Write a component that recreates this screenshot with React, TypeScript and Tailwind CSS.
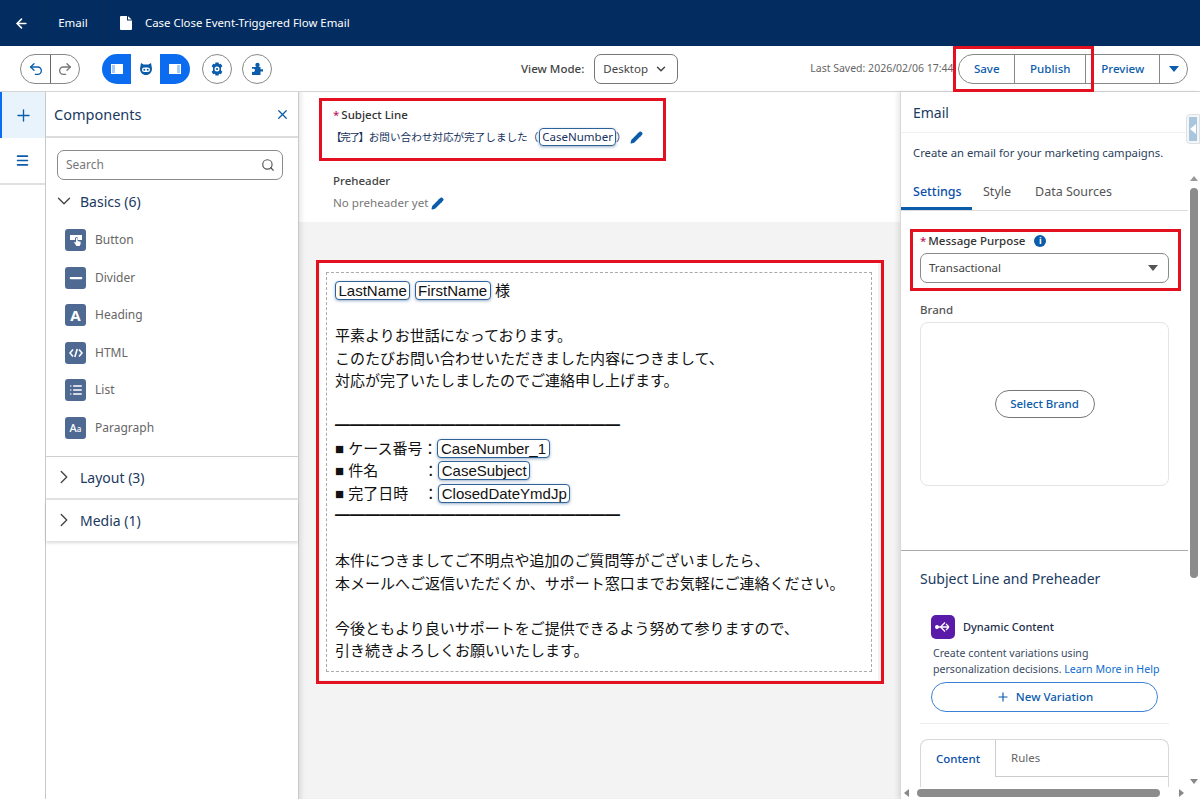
import type { ReactNode } from "react";
import {
  ArrowLeft,
  ChevronDown,
  ChevronRight,
  List,
  Menu,
  Minus,
  Pencil,
  Plus,
  Redo2,
  Search,
  Undo2,
  X,
} from "lucide-react";

const components = [
  { name: "Button", icon: "button" },
  { name: "Divider", icon: "divider" },
  { name: "Heading", icon: "heading" },
  { name: "HTML", icon: "html" },
  { name: "List", icon: "list" },
  { name: "Paragraph", icon: "paragraph" },
];

function ComponentIcon({ icon }: { icon: string }) {
  return (
    <span className="w-[21px] h-[22px] rounded-[3px] bg-[#4f6a92] text-white flex items-center justify-center shrink-0">
      {icon === "button" && (
        <svg width="14" height="14" viewBox="0 0 14 14" fill="currentColor">
          <path d="M1 2h12v5H9V5.500a1.500 1.500 0 0 0-3 0V7H1z" />
          <path d="M7 5.500a.8.8 0 0 1 1.600 0V8l3 .8V11l-1 2H7.500L5 9.500l1-.7 1 1z" />
        </svg>
      )}
      {icon === "divider" && <Minus size={18} strokeWidth={3} />}
      {icon === "heading" && <span className="text-[15px] font-bold leading-none">A</span>}
      {icon === "html" && (
        <svg width="14" height="10" viewBox="0 0 14 10" fill="none" stroke="currentColor" strokeWidth="1.600">
          <path d="M4 1.500 1 5l3 3.500M10 1.500 13 5l-3 3.500M8.200 1 5.800 9" />
        </svg>
      )}
      {icon === "list" && <List size={14} strokeWidth={2.5} />}
      {icon === "paragraph" && (
        <span className="text-[11px] font-medium leading-none">
          A<span className="text-[8px]">a</span>
        </span>
      )}
    </span>
  );
}

function Chip({ children }: { children: ReactNode }) {
  return (
    <span className="inline-block border border-[#2f6296] rounded-[4px] px-[2.500px] leading-[17px] shadow-[0_1px_3px_rgba(47,98,150,0.5)] bg-white">
      {children}
    </span>
  );
}

function PanelIcon({ side }: { side: "left" | "right" }) {
  return (
    <svg width="12" height="10" viewBox="0 0 12 10">
      <rect width="12" height="10" fill="white" />
      <rect x={side === "left" ? 1 : 8} y="1" width="3" height="8" fill="#a8ccf8" />
    </svg>
  );
}

function LeftPanel() {
  return (
    <div className="w-[254px] h-full shrink-0 border-x border-[#c9c9c9] flex flex-col">
      <div className="h-[46px] pl-2 pr-[8px] flex items-center justify-between border-b-2 border-[#dcdcdc]">
        <span className="text-[14.500px] text-[#1b3a5f] mt-px">Components</span>
        <X size={15} strokeWidth={2} className="text-[#0b5cab] mt-px" />
      </div>
      <div className="pl-[11px] pr-[15px] pt-[12px] pb-[10px]">
        <div className="h-[30px] border border-[#8a8a8a] rounded-[7px] flex items-center justify-between pl-2 pr-[7px]">
          <span className="text-[12px] text-[#777777]">Search</span>
          <Search size={14} className="text-[#555555]" />
        </div>
      </div>
      <div className="flex items-center h-[22px] pl-[7px] gap-[5px] text-[14px] text-[#1b3a5f]">
        <ChevronDown size={22} strokeWidth={1.500} className="text-[#444444]" />
        Basics (6)
      </div>
      <div className="flex flex-col pl-[19px] pt-[17px] gap-[15.500px] pb-[17px] border-b border-[#cfcfcf]">
        {components.map((c) => (
          <div key={c.name} className="flex items-center gap-[9px] h-[22px] text-[12px] text-[#666666]">
            <ComponentIcon icon={c.icon} />
            {c.name}
          </div>
        ))}
      </div>
      <div className="h-[43px] flex items-center pl-[7px] gap-[5px] text-[14px] text-[#1b3a5f] border-b-2 border-[#e2e2e2]">
        <ChevronRight size={22} strokeWidth={1.500} className="text-[#444444]" />
        Layout (3)
      </div>
      <div className="h-[41px] flex items-center pl-[7px] gap-[5px] text-[14px] text-[#1b3a5f] shadow-[0_2px_3px_rgba(0,0,0,0.14)]">
        <ChevronRight size={22} strokeWidth={1.500} className="text-[#444444]" />
        Media (1)
      </div>
    </div>
  );
}

function CenterPanel() {
  const rule = "━━━━━━━━━━━━━━━━━━━";
  return (
    <div className="flex-1 h-full bg-[#f3f3f3] flex flex-col shadow-[inset_5px_0_5px_-3px_rgba(0,0,0,0.1)]">
      <div className="h-[130px] bg-white pl-[34px] pt-[16px] shadow-[inset_5px_0_5px_-3px_rgba(0,0,0,0.1)]">
        <div className="text-[11.500px] font-medium text-[#333333] leading-[14px]">
          <span className="text-[#c0125e] mr-[2px]">*</span>Subject Line
        </div>
        <div className="flex items-center h-[20px] mt-[5px] -ml-[2px] text-[10.600px] text-[#16325c] whitespace-nowrap font-['Noto_Sans_CJK_JP','Noto_Sans',sans-serif]">
          <span className="tracking-[-1.400px] mr-[1px]">【完了】</span>お問い合わせ対応が完了しました（
          <span className="text-[11.500px] border border-[#2f6296] rounded-[4px] px-[2px] leading-[16px] shadow-[0_1px_3px_rgba(47,98,150,0.5)] ml-[1px] font-['Noto_Sans',sans-serif]">CaseNumber</span>
          <span>）</span>
          <Pencil size={13} fill="currentColor" className="text-[#0b5cab] ml-[3px]" />
        </div>
        <div className="mt-[27px] text-[11.500px] font-medium text-[#444444] leading-[14px]">Preheader</div>
        <div className="mt-[8px] flex items-center gap-[3px] text-[11.600px] text-[#777777] leading-[14px]">
          No preheader yet
          <Pencil size={13} fill="currentColor" className="text-[#0b5cab]" />
        </div>
      </div>
      <div className="ml-[21px] mt-[39px] w-[558px] h-[419px] bg-white pt-[11px] px-[6px]">
        <div className="border border-dashed border-[#aaaaaa] h-[400px] pl-[8px] pt-[7px] text-[15px] leading-[22.500px] text-[#111111] whitespace-nowrap font-['Liberation_Sans','Noto_Sans_CJK_JP',sans-serif]">
          <div>
            <Chip>LastName</Chip> <Chip>FirstName</Chip> 様
          </div>
          <div className="h-[22.500px]" />
          <div>平素よりお世話になっております。</div>
          <div>このたびお問い合わせいただきました内容につきまして、</div>
          <div>対応が完了いたしましたのでご連絡申し上げます。</div>
          <div className="h-[22.500px]" />
          <div>{rule}</div>
          <div>■ ケース番号：<Chip>CaseNumber_1</Chip></div>
          <div>■ 件名　　　：<Chip>CaseSubject</Chip></div>
          <div>■ 完了日時　：<Chip>ClosedDateYmdJp</Chip></div>
          <div>{rule}</div>
          <div className="h-[22.500px]" />
          <div>本件につきましてご不明点や追加のご質問等がございましたら、</div>
          <div>本メールへご返信いただくか、サポート窓口までお気軽にご連絡ください。</div>
          <div className="h-[22.500px]" />
          <div>今後ともより良いサポートをご提供できるよう努めて参りますので、</div>
          <div>引き続きよろしくお願いいたします。</div>
        </div>
      </div>
    </div>
  );
}

function RightPanel() {
  return (
    <div className="w-[300px] h-full shrink-0 bg-white overflow-hidden border-l border-[#d8d8d8] shadow-[-3px_0_4px_rgba(0,0,0,0.08)]">
      <div className="h-[41px] pl-3 flex items-center border-b border-[#f0f0f0] text-[14px] text-[#1b3a5f]">Email</div>
      <div className="pl-3 pt-[12px] text-[11.300px] leading-[16px] text-[#2b3f5c]">Create an email for your marketing campaigns.</div>
      <div className="mt-[19px] mr-[12px] flex items-end h-[31px] border-b border-[#dddddd] text-[12.500px] text-[#555555]">
        <div className="w-[71px] h-[31px] pl-3 pt-[4px] font-medium text-[#0b4fa8] border-b-[3px] border-[#0b5cab]">Settings</div>
        <div className="w-[63px] h-[31px] pl-[11px] pt-[4px]">Style</div>
        <div className="h-[31px] pt-[4px]">Data Sources</div>
      </div>
      <div className="pl-[19px] pr-[31px] pt-[22px]">
        <div className="flex items-center h-[16px] text-[11.500px] font-medium text-[#333333]">
          <span className="text-[#c0125e] mr-[2px]">*</span>Message Purpose
          <span className="ml-[9px] w-[12px] h-[12px] rounded-full bg-[#0b5cab] text-white text-[9px] font-bold leading-[12px] text-center">i</span>
        </div>
        <div className="mt-[4px] h-[30px] border border-[#8a8a8a] rounded-[7px] flex items-center justify-between pl-2 pr-[10px] text-[11.500px] text-[#444444]">
          Transactional
          <span className="w-0 h-0 border-x-[5px] border-x-transparent border-t-[6px] border-t-[#555555]" />
        </div>
        <div className="mt-[20px] text-[11.500px] font-medium text-[#555555] leading-[14px]">Brand</div>
        <div className="mt-[5px] h-[164px] border border-[#e4e4e4] rounded-[8px] flex items-center justify-center">
          <div className="w-[100px] h-[28px] border border-[#777777] rounded-full flex items-center justify-center text-[11.500px] font-medium text-[#0b5cab]">
            Select Brand
          </div>
        </div>
      </div>
      <div className="mt-[64px] mr-[12px] border-t border-[#aaaaaa]" />
      <div className="pl-[19px] pr-[31px] pt-[18px]">
        <div className="text-[14px] leading-[20px] text-[#1b3a5f]">Subject Line and Preheader</div>
        <div className="mt-[26px] ml-[11px] flex items-center gap-2 text-[11px] font-medium text-[#1b2e4a]">
          <span className="w-[24px] h-[24px] rounded-[5px] bg-[#5a1ba9] text-white flex items-center justify-center">
            <svg width="16" height="14" viewBox="0 0 16 14" fill="none" stroke="currentColor" strokeWidth="1.300">
              <path d="M2 7h12M14 7l-3-3M14 7l-3 3M10 2.500 5.500 7l4.500 4.500" />
              <circle cx="2" cy="7" r="1.300" fill="currentColor" />
            </svg>
          </span>
          Dynamic Content
        </div>
        <div className="mt-[6px] ml-[13px] text-[10.600px] leading-[16px] text-[#3a4a5f] whitespace-nowrap">
          Create content variations using<br />
          personalization decisions. <span className="text-[#0b6cd0]">Learn More in Help</span>
        </div>
        <div className="mt-[5px] ml-[11px] w-[227px] h-[30px] border border-[#3b82d6] rounded-full flex items-center justify-center gap-[6px] text-[11.500px] font-medium text-[#0b5cab]">
          <Plus size={14} />
          New Variation
        </div>
        <div className="mt-[11px] border-t border-[#eeeeee]" />
        <div className="mt-[15px] h-[60px] border border-[#d8d8d8] border-b-0 rounded-t-[8px] text-[11.500px]">
          <div className="flex h-[37px] border-b-0">
            <div className="w-[75px] border-r border-[#cccccc] flex items-center justify-center font-medium text-[#0b4fa8]">Content</div>
            <div className="flex-1 border-b border-[#cccccc] pl-[15px] flex items-center text-[#666666]">Rules</div>
          </div>
        </div>
      </div>
    </div>
  );
}

export default function App() {
  return (
    <div className="relative w-[1200px] h-[799px] overflow-hidden bg-white font-['Noto_Sans','Noto_Sans_CJK_JP',sans-serif]">
      {/* ヘッダー */}
      <header className="h-[46px] bg-[#032d60] text-white text-[11.500px] flex items-center">
        <div className="w-[43px] h-full flex items-center justify-center border-r border-[#0a2a52]">
          <ArrowLeft size={15} strokeWidth={2.5} />
        </div>
        <div className="w-[61px] h-full flex items-center justify-center border-r border-[#0a2a52]">Email</div>
        <svg width="12" height="14" viewBox="0 0 12 14" className="ml-[16px]" fill="white">
          <path d="M1 0h6v4.500h5V13a1 1 0 0 1-1 1H1a1 1 0 0 1-1-1V1a1 1 0 0 1 1-1z" />
          <path d="M8 0.300 11.700 3.500H8z" />
        </svg>
        <span className="ml-[13px] text-[11.400px]">Case Close Event-Triggered Flow Email</span>
      </header>

      {/* ツールバー */}
      <div className="h-[46px] flex items-center border-b border-[#d4d4d4] pl-[20px]">
        <div className="h-[30px] w-[60px] border border-[#888888] rounded-full flex overflow-hidden">
          <div className="w-[30px] flex items-center justify-center border-r border-[#666666]">
            <Undo2 size={16} className="text-[#0b5cab]" />
          </div>
          <div className="flex-1 flex items-center justify-center">
            <Redo2 size={16} className="text-[#777777]" />
          </div>
        </div>
        <div className="ml-[22px] h-[30px] w-[88px] rounded-full flex overflow-hidden bg-[#0b6cf0]">
          <div className="w-[29px] flex items-center justify-center"><PanelIcon side="left" /></div>
          <div className="w-[29px] bg-white flex items-center justify-center">
            <svg width="14" height="14" viewBox="0 0 14 14" fill="#0b5cab">
              <path d="M2 1l2.500 1.500h5L12 1l1 5.500C13 10.500 10.500 13 7 13S1 10.500 1 6.500z" />
              <rect x="3" y="5.500" width="8" height="4.500" rx="2.200" fill="white" />
              <circle cx="5.300" cy="7.700" r="1" />
              <circle cx="8.700" cy="7.700" r="1" />
            </svg>
          </div>
          <div className="w-[30px] flex items-center justify-center"><PanelIcon side="right" /></div>
        </div>
        <div className="ml-[12px] w-[30px] h-[30px] border border-[#888888] rounded-full flex items-center justify-center">
          <svg width="14" height="14" viewBox="0 0 14 14">
            <path d="M5.500.5h3l.5 1.800 1.800-.5L12.400 4.300 11 5.600v2.800l1.400 1.300-1.600 2.500L9 11.700l-.5 1.800h-3L5 11.700l-1.800.5L1.600 9.700 3 8.400V5.600L1.600 4.300 3.200 1.800 5 2.300z" fill="#0b5cab" />
            <circle cx="7" cy="7" r="2.500" fill="white" />
            <circle cx="7" cy="7" r="1.100" fill="#0b5cab" />
          </svg>
        </div>
        <div className="ml-[10px] w-[30px] h-[30px] border border-[#888888] rounded-full flex items-center justify-center">
          <svg width="14" height="14" viewBox="0 0 14 14" fill="#0b5cab">
            <circle cx="7.500" cy="3" r="2.200" />
            <path d="M5 5h5.500v2.200H13v2.400h-2.500V13H2V9.500a1.700 1.700 0 1 0 0-2.500V5z" />
          </svg>
        </div>
        <span className="ml-[249px] text-[11.500px] font-medium text-[#444444]">View Mode:</span>
        <div className="ml-[10px] w-[84px] h-[30px] border border-[#777777] rounded-[7px] flex items-center justify-between pl-2 pr-[9px] text-[11.500px] text-[#444444]">
          Desktop
          <ChevronDown size={14} strokeWidth={2.500} className="text-[#444444]" />
        </div>
        <span className="ml-[132px] w-[148px] text-[10.500px] text-[#666666] whitespace-nowrap overflow-hidden">Last Saved: 2026/02/06 17:44</span>
        <div className="w-[230px] h-[30px] border border-[#888888] rounded-full flex text-[11.500px] font-medium text-[#0b5cab] overflow-hidden bg-white">
          <div className="w-[56px] flex items-center justify-center border-r border-[#888888]">Save</div>
          <div className="w-[71px] flex items-center justify-center border-r border-[#888888]">Publish</div>
          <div className="w-[74px] flex items-center justify-center border-r border-[#888888]">Preview</div>
          <div className="flex-1 flex items-center justify-center">
            <span className="w-0 h-0 border-x-[5px] border-x-transparent border-t-[6px] border-t-[#0b5cab]" />
          </div>
        </div>
      </div>

      {/* メイン */}
      <div className="h-[707px] flex">
        <div className="w-[45px] h-full shrink-0 flex flex-col">
          <div className="h-[46px] bg-[#e8f3fc] border-l-2 border-[#0b6cf0] flex items-center justify-center">
            <Plus size={19} strokeWidth={1.700} className="text-[#0b5cab]" />
          </div>
          <div className="h-[47px] flex items-center justify-center border-b-2 border-[#e0e0e0]">
            <Menu size={15} strokeWidth={2.500} className="text-[#0b5cab]" />
          </div>
        </div>
        <LeftPanel />
        <CenterPanel />
        <RightPanel />
      </div>

      {/* スクロールバー */}
      <div className="absolute right-[2px] top-[176px] w-[8px] h-[5px] border-x-[4px] border-x-transparent border-b-[5px] border-b-[#999999]" />
      <div className="absolute right-[2px] top-[188px] w-[8px] h-[390px] rounded-full bg-[#8c8c8c]" />
      <div className="absolute right-[2px] top-[779px] w-[8px] h-[5px] border-x-[4px] border-x-transparent border-t-[5px] border-t-[#888888]" />
      <div className="absolute left-[901px] right-0 bottom-0 h-[12px] bg-white flex items-center">
        <span className="ml-[3px] w-0 h-0 border-y-[4px] border-y-transparent border-r-[5px] border-r-[#888888]" />
        <span className="ml-[8px] w-[243px] h-[8px] rounded-full bg-[#8c8c8c]" />
        <span className="ml-[19px] w-0 h-0 border-y-[4px] border-y-transparent border-l-[5px] border-l-[#888888]" />
      </div>

      {/* 折りたたみハンドル */}
      <div className="absolute left-[1186px] top-[114px] w-[14px] h-[30px] bg-[#f4f7fa] border border-[#e0e0e0] rounded-l-[4px] p-[2px]">
        <div className="w-full h-full bg-[#a9c6dc] flex items-center justify-center">
          <span className="w-0 h-0 border-y-[5px] border-y-transparent border-r-[6px] border-r-white" />
        </div>
      </div>

      {/* 赤枠の注釈 */}
      <div className="absolute left-[953px] top-[46px] w-[141px] h-[46px] border-[3px] border-[#e3101f] pointer-events-none" />
      <div className="absolute left-[319px] top-[98px] w-[347px] h-[63px] border-[3px] border-[#e3101f] pointer-events-none" />
      <div className="absolute left-[316px] top-[260px] w-[568px] h-[424px] border-[3px] border-[#e3101f] pointer-events-none" />
      <div className="absolute left-[910px] top-[229px] w-[271px] h-[62px] border-[3px] border-[#e3101f] pointer-events-none" />
    </div>
  );
}
